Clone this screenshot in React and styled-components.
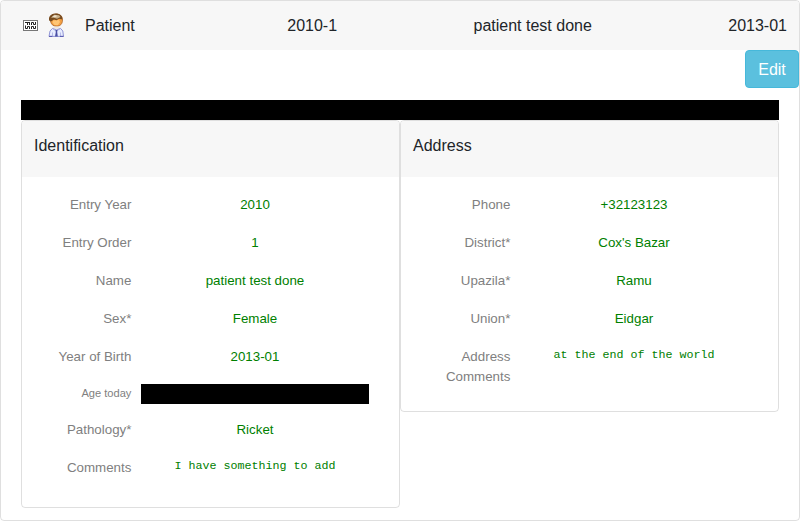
import React from 'react';
import styled, { createGlobalStyle } from 'styled-components';

const GlobalStyle = createGlobalStyle`
  *, *::before, *::after { box-sizing: border-box; }
  body {
    margin: 0;
    background: #fff;
    color: #212529;
    font: 16px/24px "Liberation Sans", Arial, sans-serif;
  }
`;

const Card = styled.main`
  height: 521px;
  border: 1px solid rgba(0, 0, 0, 0.125);
  border-radius: 4px;
  overflow: hidden;
`;

const CardHeader = styled.header`
  display: flex;
  align-items: center;
  justify-content: space-between;
  height: 49px;
  padding: 0 12px 0 22px;
  background: #f7f7f7;
`;

const Title = styled.div`
  display: flex;
  align-items: center;
  margin-right: 16px;
`;

const GlyphIcon = styled.svg`
  width: 15px;
  height: 11px;
  margin-right: 10px;
`;

const PersonIcon = styled.svg`
  width: 17px;
  height: 25px;
  margin-right: 20px;
`;

const Toolbar = styled.div`
  display: flex;
  justify-content: flex-end;
  height: 50px;
`;

const EditButton = styled.button`
  width: 54px;
  height: 38px;
  padding: 2px 0 0;
  border: 1px solid #46b8da;
  border-radius: 4px;
  background: #5bc0de;
  color: #fff;
  font: inherit;
`;

const Body = styled.div`
  padding: 0 20px;
`;

const Divider = styled.div`
  height: 20px;
  background: #000;
`;

const Panels = styled.div`
  display: grid;
  grid-template-columns: 1fr 1fr;
  align-items: start;
`;

const Panel = styled.section`
  height: ${(p) => p.$height}px;
  border: 1px solid rgba(0, 0, 0, 0.125);
  border-radius: 4px;
  overflow: hidden;
`;

const PanelHeader = styled.h2`
  height: 56px;
  margin: 0;
  padding: 13px 12px 12px;
  background: #f7f7f7;
  font: inherit;
`;

const Fields = styled.dl`
  margin: 0;
  padding-top: 17px;
`;

const Row = styled.div`
  display: grid;
  grid-template-columns: 85.4px 228px;
  column-gap: 9.6px;
  align-items: start;
  min-height: ${(p) => (p.$compact ? 35 : 38)}px;
  padding-left: 24px;
  font-size: 13.3333px;
  line-height: 20px;
`;

const Label = styled.dt`
  padding-top: ${(p) => (p.$small ? 0 : 1)}px;
  color: #808080;
  font-size: ${(p) => (p.$small ? '11.1px' : 'inherit')};
  line-height: ${(p) => (p.$small ? '18px' : 'inherit')};
  text-align: right;
`;

const Value = styled.dd`
  margin: 0;
  padding-top: 1px;
  color: #008000;
  text-align: center;
`;

const Note = styled(Value)`
  padding-top: 0;
  font: 11.67px/18px "Liberation Mono", "Courier New", monospace;
`;

const Redacted = styled.dd`
  height: 20px;
  margin: 0;
  background: #000;
`;

const identification = [
  { label: 'Entry Year', value: '2010' },
  { label: 'Entry Order', value: '1' },
  { label: 'Name', value: 'patient test done' },
  { label: 'Sex*', value: 'Female' },
  { label: 'Year of Birth', value: '2013-01' },
  { label: 'Age today', kind: 'redacted' },
  { label: 'Pathology*', value: 'Ricket' },
  { label: 'Comments', value: 'I have something to add', kind: 'note' },
];

const address = [
  { label: 'Phone', value: '+32123123' },
  { label: 'District*', value: "Cox's Bazar" },
  { label: 'Upazila*', value: 'Ramu' },
  { label: 'Union*', value: 'Eidgar' },
  { label: 'Address Comments', value: 'at the end of the world', kind: 'note' },
];

function CodeGlyph() {
  return (
    <GlyphIcon viewBox="0 0 15 11" aria-hidden="true">
      <rect x="0.5" y="0.5" width="14" height="10" fill="#fff" stroke="#777" />
      <path
        d="M2 2.5H7M4.5 2.5V5M6.5 2.5V5M2.5 5.5V8.5H4.5V6.5H6.5V9M8.5 5V2.5H10.5V4.5H12.5V2M8.5 9V6.5H10.5V8.5H12.5V6"
        fill="none"
        stroke="#222"
        strokeWidth="1"
      />
    </GlyphIcon>
  );
}

function Person() {
  return (
    <PersonIcon viewBox="0 0 17 25" aria-hidden="true">
      <path d="M1.8 6C2 2.5 5 1 8 1C12 1 14.5 3 14.5 7C14.5 11 12.2 13.3 8.5 13.3C5 13.3 2.8 11 2.5 8Z" fill="#f2a044" stroke="#a75d23" strokeWidth=".7" />
      <path d="M5 7.5L11 7L12 9L10 12H6.5L4.5 9.5Z" fill="#ffc574" />
      <path d="M1.1 7.5C.4 3.5 3 .6 7.5.6C12 .6 14.8 3 14.4 6.5L11 5.7L8.5 7.2L6 6.5L3 8.5Z" fill="#764b20" />
      <path d="M3 4.7L6.3 1.8L11 2.2L12.5 4L9 5.8L6 4.8Z" fill="#c9b18b" />
      <path d="M4 3.6L7 2.3L9.5 3L7 4.2Z" fill="#eee2ce" />
      <path d="M5.5 13.5H11L12 16L8.5 17L5 16Z" fill="#eee7e2" />
      <path d="M4.5 15.4L8.5 17L12.5 15.4L14.8 18L15.5 23.4H1L2 18Z" fill="#e8edff" stroke="#8589cf" strokeWidth=".9" />
      <path d="M4.5 19.5V23M12.5 19.5V23M5 16L8 18L12 16" fill="none" stroke="#a8afe2" strokeWidth=".8" />
      <path d="M7.5 17H9.5L9.2 19L9.8 23.5H7L7.8 19Z" fill="#4b50a5" />
      <path d="M1 23.4H4.3M12 23.4H15.5" stroke="#4d4daa" strokeWidth=".9" />
    </PersonIcon>
  );
}

function Field({ label, value, kind }) {
  const redacted = kind === 'redacted';
  const Content = kind === 'note' ? Note : Value;
  return (
    <Row $compact={redacted}>
      <Label $small={redacted}>{label}</Label>
      {redacted ? <Redacted /> : <Content>{value}</Content>}
    </Row>
  );
}

function DetailPanel({ title, fields, height }) {
  return (
    <Panel $height={height}>
      <PanelHeader>{title}</PanelHeader>
      <Fields>
        {fields.map((field) => (
          <Field key={field.label} {...field} />
        ))}
      </Fields>
    </Panel>
  );
}

export default function App() {
  return (
    <>
      <GlobalStyle />
      <Card>
        <CardHeader>
          <Title>
            <CodeGlyph />
            <Person />
            <span>Patient</span>
          </Title>
          <span>2010-1</span>
          <span>patient test done</span>
          <span>2013-01</span>
        </CardHeader>
        <Toolbar>
          <EditButton type="button">Edit</EditButton>
        </Toolbar>
        <Body>
          <Divider />
          <Panels>
            <DetailPanel title="Identification" fields={identification} height={388} />
            <DetailPanel title="Address" fields={address} height={292} />
          </Panels>
        </Body>
      </Card>
    </>
  );
}
